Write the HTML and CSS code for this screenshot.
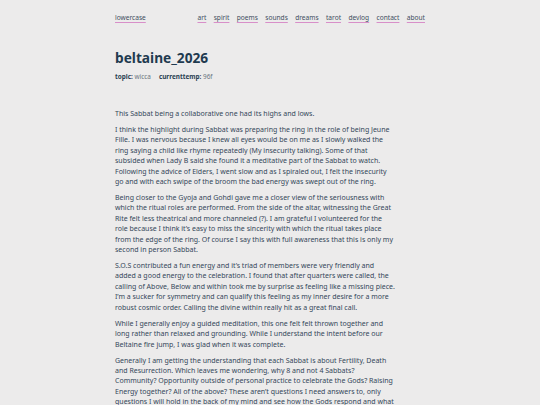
FILE: index.html
```html
<!DOCTYPE html>
<html lang="en">
<head>
<meta charset="utf-8">
<title>beltaine_2026</title>
<link rel="stylesheet" href="styles.css">
</head>
<body>
<div class="page">
  <header class="site-header">
    <a class="brand" href="#">lowercase</a>
    <nav class="nav">
      <a href="#">art</a>
      <a href="#">spirit</a>
      <a href="#">poems</a>
      <a href="#">sounds</a>
      <a href="#">dreams</a>
      <a href="#">tarot</a>
      <a href="#">devlog</a>
      <a href="#">contact</a>
      <a href="#">about</a>
    </nav>
  </header>
  <main class="post">
    <h1 class="title">beltaine_2026</h1>
    <div class="meta">
      <span class="meta-item"><b>topic:</b> wicca</span>
      <span class="meta-item"><b>currenttemp:</b> 96f</span>
    </div>
    <div class="content">
      <p>This Sabbat being a collaborative one had its highs and lows.</p>
      <p>I think the highlight during Sabbat was preparing the ring in the role of being Jeune Fille. I was nervous because I knew all eyes would be on me as I slowly walked the ring saying a child like rhyme repeatedly (My insecurity talking). Some of that subsided when Lady B said she found it a meditative part of the Sabbat to watch. Following the advice of Elders, I went slow and as I spiraled out, I felt the insecurity go and with each swipe of the broom the bad energy was swept out of the ring.</p>
      <p>Being closer to the Gyoja and Gohdi gave me a closer view of the seriousness with which the ritual roles are performed. From the side of the altar, witnessing the Great Rite felt less theatrical and more channeled (?). I am grateful I volunteered for the role because I think it’s easy to miss the sincerity with which the ritual takes place from the edge of the ring. Of course I say this with full awareness that this is only my second in person Sabbat.</p>
      <p>S.O.S contributed a fun energy and it’s triad of members were very friendly and added a good energy to the celebration. I found that after quarters were called, the calling of Above, Below and within took me by surprise as feeling like a missing piece. I’m a sucker for symmetry and can qualify this feeling as my inner desire for a more robust cosmic order. Calling the divine within really hit as a great final call.</p>
      <p>While I generally enjoy a guided meditation, this one felt felt thrown together and long rather than relaxed and grounding. While I understand the intent before our Beltaine fire jump, I was glad when it was complete.</p>
      <p>Generally I am getting the understanding that each Sabbat is about Fertility, Death and Resurrection. Which leaves me wondering, why 8 and not 4 Sabbats? Community? Opportunity outside of personal practice to celebrate the Gods? Raising Energy together? All of the above? These aren’t questions I need answers to, only questions I will hold in the back of my mind and see how the Gods respond and what they reveal to me over the coming year and the next turn of the wheel.</p>
    </div>
  </main>
</div>
</body>
</html>
```

FILE: styles.css
```css
html, body {
  margin: 0;
  padding: 0;
  background: #ecebeb;
}

body {
  font-family: "Noto Sans", "Open Sans", sans-serif;
  color: #34475a;
}

.page {
  width: 310px;
  margin: 0 auto;
  padding-top: 13px;
}

.site-header {
  display: flex;
  justify-content: space-between;
  align-items: baseline;
  font-size: 6.6px;
  line-height: 10px;
}

.site-header a {
  color: #3e4d5e;
  text-decoration: underline;
  text-decoration-color: #d88fc9;
  text-underline-offset: 1.5px;
}

.nav {
  display: flex;
  gap: 7.4px;
}

.post {
  padding-top: 25px;
}

.title {
  margin: 0;
  font-size: 13.7px;
  line-height: 20px;
  font-weight: 700;
  color: #1f3a4f;
}

.meta {
  display: flex;
  gap: 8px;
  margin-top: 4px;
  font-size: 6.4px;
  line-height: 10px;
  color: #6b7580;
}

.meta b {
  color: #2b3f52;
  font-weight: 700;
}

.content {
  margin-top: 27px;
  width: 280px;
  font-size: 7px;
  line-height: 10.4px;
}

.content p {
  margin: 0 0 5.6px;
}
```
